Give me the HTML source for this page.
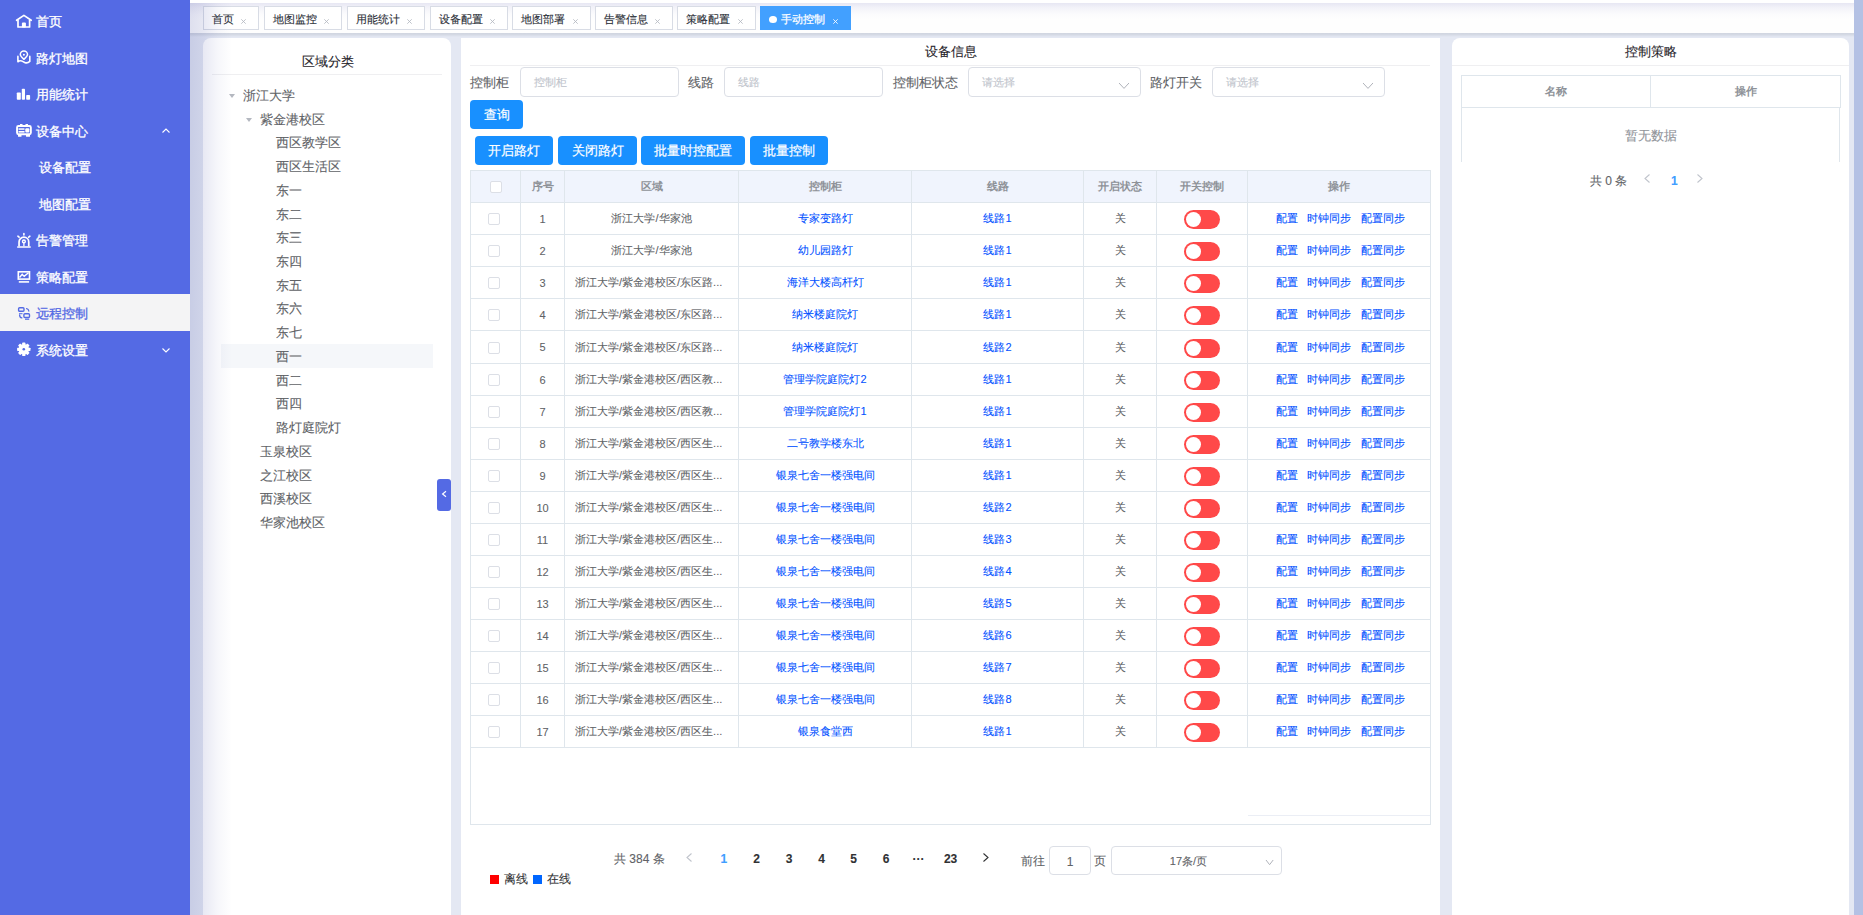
<!DOCTYPE html><html><head><meta charset="utf-8"><style>
*{box-sizing:border-box;margin:0;padding:0}
html,body{width:1863px;height:915px;overflow:hidden}
body{position:relative;background:#e4e8f3;font-family:"Liberation Sans",sans-serif;color:#606266;-webkit-text-stroke-width:0.1px}
.abs{position:absolute}
#sb{left:0;top:0;width:190px;height:915px;background:#546ae4}
.mi{-webkit-text-stroke-width:0.3px;position:absolute;left:0;width:190px;height:36.56px;color:#fff;font-size:13px;line-height:36.56px;white-space:nowrap}
.mi .t{position:absolute;left:36px;top:2px}
.mi.act .t{top:2px}
.mi.sub .t{left:39px}
.mi.act{background:#f4f4f5;color:#546ae4}

.mi .chev{position:absolute;left:162px;top:15px;width:8px;height:8px}
#rs{left:1854px;top:0;width:9px;height:915px;background:#b4c1e4}
#tb{left:190px;top:3px;width:1664px;height:30px;background:linear-gradient(#e7e7f3 0px,#f3f3f9 5px,#fbfbfd 11px,#fefefe 16px,#fefefe 30px)}
#tbsh{left:190px;top:33px;width:1664px;height:4px;background:linear-gradient(#d0d5e0 0px,#d4d9e4 1.5px,#e4e8f3 4px)}
.tab{position:absolute;top:6px;height:24px;border:1px solid #d8dce5;background:#fff;font-size:11px;line-height:24px;color:#2a2e36;padding-left:8px;-webkit-text-stroke-width:0.1px;white-space:nowrap}
.tab .x{position:absolute;right:12px;top:11.5px;width:5px;height:5px}
.tab.on{-webkit-text-stroke-width:0.25px;background:#42a0ff;border-color:#42a0ff;color:#fff}
.tab.on .x{color:#fff}
.panel{position:absolute;background:#fff}
#lp{left:203px;top:38px;width:248px;height:877px;border-radius:8px 8px 0 0}
#mp{left:461px;top:38px;width:979px;height:877px}
#rp{left:1452px;top:38px;width:397px;height:877px;border-radius:8px 8px 0 0}
#shadow{left:190px;top:3px;width:60px;height:912px;background:linear-gradient(90deg,rgba(40,50,150,.15) 0px,rgba(40,50,150,.11) 13px,rgba(40,50,150,.04) 28px,rgba(40,50,150,0) 42px)}
.ptitle{position:absolute;font-size:13px;color:#1f2329;white-space:nowrap}
.hr{position:absolute;height:1px;background:#efeff1}
.tn{position:absolute;font-size:13px;color:#606266;white-space:nowrap;line-height:24px;height:24px}
.tri{position:absolute;width:0;height:0;border-left:3.5px solid transparent;border-right:3.5px solid transparent;border-top:4px solid #b4b8c0}
.lbl{position:absolute;font-size:13px;color:#606266;white-space:nowrap;line-height:30px;top:68px}
.inp{position:absolute;top:67px;height:30px;border:1px solid #dcdfe6;border-radius:4px;background:#fff;font-size:11px;color:#c0c4cc;line-height:29px;padding-left:13px;white-space:nowrap}
.sel .arr{position:absolute;right:12px;top:10px;width:7px;height:7px;border-right:1px solid #a8abb2;border-bottom:1px solid #a8abb2;transform:rotate(45deg)}
.btn{-webkit-text-stroke-width:0.2px;position:absolute;background:#1890ff;color:#fff;font-size:13px;border-radius:4px;text-align:center;white-space:nowrap}
table.dt{position:absolute;border-collapse:collapse;table-layout:fixed;font-size:11px}
.dt td,.dt th{-webkit-text-stroke-width:0.08px;border:1px solid #dfe6ec;text-align:center;white-space:nowrap;overflow:hidden;text-overflow:ellipsis;padding:0 8px}
.dt th{-webkit-text-stroke-width:0;background:#f0f4fd;color:#8e9298;font-weight:bold;height:32px}
.dt td{height:32px;color:#606266}
.dt td.lk{color:#0050ff}
.dt td .cb{position:relative;left:-2px}
.dt td .sw{top:1px}
.cb{display:inline-block;width:12px;height:12px;border:1px solid #dcdfe6;border-radius:2px;background:#fff;vertical-align:middle}
.sw{display:inline-block;position:relative;width:36px;height:19px;border-radius:10px;background:#ff4949;vertical-align:middle}
.sw:after{content:"";position:absolute;left:1.5px;top:2px;width:15px;height:15px;border-radius:50%;background:#fff}
.ops span{margin:0 4px}
.pg{position:absolute;font-size:12px;white-space:nowrap}
</style></head><body>
<div id="sb" class="abs">
<div class="mi" style="top:2.00px"><span class="t">首页</span></div>
<svg class="ic" style="position:absolute;left:15px;top:12px" width="18" height="18" viewBox="0 0 18 18"><path d="M1.6 8.3 L8.9 3.4 L16.2 8.3" fill="none" stroke="#fff" stroke-width="1.7" stroke-linejoin="round" stroke-linecap="round"/><path d="M3 8 V15 H14.6 V8" fill="none" stroke="#fff" stroke-width="1.7" stroke-linejoin="round"/><rect x="6.9" y="10.6" width="4" height="4.8" rx="1" fill="#fff"/></svg>
<div class="mi" style="top:38.50px"><span class="t">路灯地图</span></div>
<svg class="ic" style="position:absolute;left:15px;top:49px" width="18" height="18" viewBox="0 0 18 18"><path d="M8.9 10.3 C6.6 8.4 5.3 7 5.3 5.6 A3.6 3.6 0 0 1 12.5 5.6 C12.5 7 11.2 8.4 8.9 10.3 Z" fill="none" stroke="#fff" stroke-width="1.5" stroke-linejoin="round"/><circle cx="8.9" cy="5.8" r="1" fill="#fff"/><path d="M2.9 7.4 V12.8 Q4.6 11.3 6.6 11.9 L10.2 13.7 Q12.7 14.4 14.8 12.4 V7.4" fill="none" stroke="#fff" stroke-width="1.6" stroke-linejoin="round" stroke-linecap="round"/></svg>
<div class="mi" style="top:75.00px"><span class="t">用能统计</span></div>
<svg class="ic" style="position:absolute;left:15px;top:86px" width="18" height="16" viewBox="0 0 18 16"><rect x="1.8" y="6.4" width="4" height="7.4" rx="0.8" fill="#fff"/><rect x="6.8" y="2.7" width="3.2" height="11.1" rx="0.8" fill="#fff"/><rect x="11.2" y="9" width="3.9" height="4.8" rx="0.8" fill="#fff"/></svg>
<div class="mi" style="top:111.50px"><span class="t">设备中心</span><svg class="chev" viewBox="0 0 8 8"><path d="M0.5 5.5 L4 2 L7.5 5.5" fill="none" stroke="#fff" stroke-width="1.1"/></svg></div>
<svg class="ic" style="position:absolute;left:15px;top:122px" width="18" height="16" viewBox="0 0 18 16"><rect x="2.05" y="3.95" width="13.8" height="8.3" rx="1.5" fill="none" stroke="#fff" stroke-width="1.9"/><rect x="5" y="2" width="2.5" height="2" fill="#fff"/><rect x="10.5" y="2" width="2.5" height="2" fill="#fff"/><rect x="3" y="12.5" width="3.5" height="2.2" rx="0.5" fill="#fff"/><rect x="11" y="12.5" width="4" height="2.2" rx="0.5" fill="#fff"/><rect x="3.5" y="6.3" width="6" height="1.5" fill="#fff"/><rect x="3.5" y="9" width="6" height="1.6" fill="#fff"/><rect x="10.3" y="6.2" width="4" height="4.3" rx="1" fill="#fff"/></svg>
<div class="mi sub" style="top:148.00px"><span class="t">设备配置</span></div>
<div class="mi sub" style="top:184.50px"><span class="t">地图配置</span></div>
<div class="mi" style="top:221.00px"><span class="t">告警管理</span></div>
<svg class="ic" style="position:absolute;left:15px;top:231px" width="18" height="18" viewBox="0 0 18 18"><rect x="2.1" y="15.2" width="13.7" height="1.6" rx="0.5" fill="#fff"/><path d="M4.05 15.3 V11 A4.85 4.85 0 0 1 13.75 11 V15.3" fill="none" stroke="#fff" stroke-width="1.7"/><circle cx="8.9" cy="10.4" r="1.4" fill="none" stroke="#fff" stroke-width="1.4"/><path d="M8.9 11.8 V15.3" stroke="#fff" stroke-width="1.3"/><path d="M8.9 2.5 V4 M2.9 5.2 L4.1 6.2 M14.9 5.2 L13.7 6.2" stroke="#fff" stroke-width="1.6" stroke-linecap="round"/></svg>
<div class="mi" style="top:257.50px"><span class="t">策略配置</span></div>
<svg class="ic" style="position:absolute;left:15px;top:268px" width="18" height="16" viewBox="0 0 18 16"><rect x="3.3" y="3.8" width="11.2" height="7.3" fill="none" stroke="#fff" stroke-width="1.6"/><path d="M4.5 9.5 L7.2 6.2 L9.2 8.4 L13.5 4.8" fill="none" stroke="#fff" stroke-width="1.4"/><rect x="3.8" y="13" width="10.3" height="1.8" fill="#fff" fill-opacity="0.88"/></svg>
<div class="mi act" style="top:294px;height:37px"><span class="t">远程控制</span></div>
<svg class="ic" style="position:absolute;left:15px;top:304px" width="18" height="17" viewBox="0 0 18 17"><rect x="3.6" y="3.7" width="5.4" height="3.6" rx="1" fill="none" stroke="#546ae4" stroke-width="1.4"/><rect x="4" y="9.2" width="3.5" height="1" fill="#546ae4"/><path d="M4.6 11 Q4.6 13.5 6.8 13.9" fill="none" stroke="#546ae4" stroke-width="1.3" stroke-linecap="round"/><path d="M11.6 4.6 Q13.5 5 13.8 7" fill="none" stroke="#546ae4" stroke-width="1.3" stroke-linecap="round"/><rect x="8.9" y="9.7" width="5.6" height="3.8" rx="1" fill="none" stroke="#546ae4" stroke-width="1.4"/><rect x="10" y="14.5" width="4.2" height="1.5" fill="#546ae4" fill-opacity="0.8"/></svg>
<div class="mi" style="top:330.50px"><span class="t">系统设置</span><svg class="chev" viewBox="0 0 8 8"><path d="M0.5 2.5 L4 6 L7.5 2.5" fill="none" stroke="#fff" stroke-width="1.1"/></svg></div>
<svg class="ic" style="position:absolute;left:15px;top:341px" width="18" height="18" viewBox="0 0 18 18"><g fill="#fff"><circle cx="8.8" cy="8.3" r="5.2"/><rect x="7.2" y="1.6" width="3.2" height="13.4" rx="0.6" transform="rotate(0 8.8 8.3)"/><rect x="7.2" y="1.6" width="3.2" height="13.4" rx="0.6" transform="rotate(45 8.8 8.3)"/><rect x="7.2" y="1.6" width="3.2" height="13.4" rx="0.6" transform="rotate(90 8.8 8.3)"/><rect x="7.2" y="1.6" width="3.2" height="13.4" rx="0.6" transform="rotate(135 8.8 8.3)"/></g><circle cx="8.8" cy="8.3" r="1.3" fill="#546ae4"/></svg>
</div>
<div class="abs" style="left:190px;top:0;width:1664px;height:3px;background:#fff"></div><div id="tb" class="abs"></div><div id="tbsh" class="abs"></div>
<div class="tab" style="left:203px;width:56px">首页<svg class="x" viewBox="0 0 5 5"><path d="M0.3 0.3 L4.7 4.7 M4.7 0.3 L0.3 4.7" stroke="#b4b8c0" stroke-width="0.85"/></svg></div>
<div class="tab" style="left:264px;width:78px">地图监控<svg class="x" viewBox="0 0 5 5"><path d="M0.3 0.3 L4.7 4.7 M4.7 0.3 L0.3 4.7" stroke="#b4b8c0" stroke-width="0.85"/></svg></div>
<div class="tab" style="left:347px;width:78px">用能统计<svg class="x" viewBox="0 0 5 5"><path d="M0.3 0.3 L4.7 4.7 M4.7 0.3 L0.3 4.7" stroke="#b4b8c0" stroke-width="0.85"/></svg></div>
<div class="tab" style="left:430px;width:78px">设备配置<svg class="x" viewBox="0 0 5 5"><path d="M0.3 0.3 L4.7 4.7 M4.7 0.3 L0.3 4.7" stroke="#b4b8c0" stroke-width="0.85"/></svg></div>
<div class="tab" style="left:512px;width:79px">地图部署<svg class="x" viewBox="0 0 5 5"><path d="M0.3 0.3 L4.7 4.7 M4.7 0.3 L0.3 4.7" stroke="#b4b8c0" stroke-width="0.85"/></svg></div>
<div class="tab" style="left:595px;width:78px">告警信息<svg class="x" viewBox="0 0 5 5"><path d="M0.3 0.3 L4.7 4.7 M4.7 0.3 L0.3 4.7" stroke="#b4b8c0" stroke-width="0.85"/></svg></div>
<div class="tab" style="left:677px;width:79px">策略配置<svg class="x" viewBox="0 0 5 5"><path d="M0.3 0.3 L4.7 4.7 M4.7 0.3 L0.3 4.7" stroke="#b4b8c0" stroke-width="0.85"/></svg></div>
<div class="tab on" style="left:760px;width:91px;padding-left:20px">手动控制<svg class="x" viewBox="0 0 5 5"><path d="M0.3 0.3 L4.7 4.7 M4.7 0.3 L0.3 4.7" stroke="#fff" stroke-width="0.85"/></svg><span style="position:absolute;left:7.5px;top:8.5px;width:8px;height:7.5px;border-radius:50%;background:#fff"></span></div>
<div id="rs" class="abs"></div>
<div id="lp" class="panel"></div><div id="mp" class="panel"></div><div id="rp" class="panel"></div>
<div class="ptitle" style="left:302px;top:52px;line-height:20px">区域分类</div>
<div class="hr" style="left:212px;top:74px;width:230px"></div>
<div class="abs" style="left:221px;top:344px;width:212px;height:24px;background:#f5f7fa"></div>
<div class="tn" style="left:243px;top:84.00px">浙江大学</div>
<div class="tri" style="left:229px;top:94.00px"></div>
<div class="tn" style="left:260px;top:107.72px">紫金港校区</div>
<div class="tri" style="left:246px;top:117.72px"></div>
<div class="tn" style="left:276px;top:131.44px">西区教学区</div>
<div class="tn" style="left:276px;top:155.16px">西区生活区</div>
<div class="tn" style="left:276px;top:178.88px">东一</div>
<div class="tn" style="left:276px;top:202.60px">东二</div>
<div class="tn" style="left:276px;top:226.32px">东三</div>
<div class="tn" style="left:276px;top:250.04px">东四</div>
<div class="tn" style="left:276px;top:273.76px">东五</div>
<div class="tn" style="left:276px;top:297.48px">东六</div>
<div class="tn" style="left:276px;top:321.20px">东七</div>
<div class="tn" style="left:276px;top:344.92px">西一</div>
<div class="tn" style="left:276px;top:368.64px">西二</div>
<div class="tn" style="left:276px;top:392.36px">西四</div>
<div class="tn" style="left:276px;top:416.08px">路灯庭院灯</div>
<div class="tn" style="left:260px;top:439.80px">玉泉校区</div>
<div class="tn" style="left:260px;top:463.52px">之江校区</div>
<div class="tn" style="left:260px;top:487.24px">西溪校区</div>
<div class="tn" style="left:260px;top:510.96px">华家池校区</div>
<div class="abs" style="left:437px;top:479px;width:14px;height:32px;background:#546ae4;border-radius:3px"><svg width="14" height="32" style="position:absolute;left:0;top:0"><path d="M9 12.3 L5.6 15 L9 17.7" fill="none" stroke="#fff" stroke-width="1.2"/></svg></div>
<div class="ptitle" style="left:925px;top:42px;line-height:20px">设备信息</div>
<div class="hr" style="left:470px;top:65px;width:960px"></div>
<div class="lbl" style="left:470px">控制柜</div>
<div class="inp" style="left:520px;width:159px">控制柜</div>
<div class="lbl" style="left:688px">线路</div>
<div class="inp" style="left:724px;width:159px">线路</div>
<div class="lbl" style="left:893px">控制柜状态</div>
<div class="inp sel" style="left:968px;width:173px">请选择<svg style="position:absolute;right:10px;top:13.6px" width="12" height="7.4" viewBox="0 0 12 7.4"><path d="M1 1 L6.0 6.4 L11 1" fill="none" stroke="#b0b3ba" stroke-width="1"/></svg></div>
<div class="lbl" style="left:1150px">路灯开关</div>
<div class="inp sel" style="left:1212px;width:173px">请选择<svg style="position:absolute;right:10px;top:13.6px" width="12" height="7.4" viewBox="0 0 12 7.4"><path d="M1 1 L6.0 6.4 L11 1" fill="none" stroke="#b0b3ba" stroke-width="1"/></svg></div>
<div class="btn" style="left:470px;top:100px;width:53px;height:29px;line-height:29px">查询</div>
<div class="btn" style="left:475px;top:136px;width:78px;height:29px;line-height:29px">开启路灯</div>
<div class="btn" style="left:558px;top:136px;width:79px;height:29px;line-height:29px">关闭路灯</div>
<div class="btn" style="left:641px;top:136px;width:104px;height:29px;line-height:29px">批量时控配置</div>
<div class="btn" style="left:750px;top:136px;width:78px;height:29px;line-height:29px">批量控制</div>
<table class="dt" style="left:470px;top:170px;width:960px">
<colgroup><col style="width:50px"><col style="width:44px"><col style="width:174px"><col style="width:173px"><col style="width:172px"><col style="width:73px"><col style="width:91px"><col style="width:183px"></colgroup>
<tr><th><span class="cb"></span></th><th>序号</th><th>区域</th><th>控制柜</th><th>线路</th><th>开启状态</th><th>开关控制</th><th>操作</th></tr>
<tr><td><span class="cb"></span></td><td>1</td><td>浙江大学/华家池</td><td class="lk">专家变路灯</td><td class="lk">线路1</td><td>关</td><td><span class="sw"></span></td><td class="lk ops" style="padding:0 0 0 3px"><span style="margin:0 9px 0 0">配置</span><span style="margin:0 10px 0 0">时钟同步</span><span style="margin:0">配置同步</span></td></tr>
<tr><td><span class="cb"></span></td><td>2</td><td>浙江大学/华家池</td><td class="lk">幼儿园路灯</td><td class="lk">线路1</td><td>关</td><td><span class="sw"></span></td><td class="lk ops" style="padding:0 0 0 3px"><span style="margin:0 9px 0 0">配置</span><span style="margin:0 10px 0 0">时钟同步</span><span style="margin:0">配置同步</span></td></tr>
<tr><td><span class="cb"></span></td><td>3</td><td style="text-align:left;padding-left:10px">浙江大学/紫金港校区/东区路...</td><td class="lk">海洋大楼高杆灯</td><td class="lk">线路1</td><td>关</td><td><span class="sw"></span></td><td class="lk ops" style="padding:0 0 0 3px"><span style="margin:0 9px 0 0">配置</span><span style="margin:0 10px 0 0">时钟同步</span><span style="margin:0">配置同步</span></td></tr>
<tr><td><span class="cb"></span></td><td>4</td><td style="text-align:left;padding-left:10px">浙江大学/紫金港校区/东区路...</td><td class="lk">纳米楼庭院灯</td><td class="lk">线路1</td><td>关</td><td><span class="sw"></span></td><td class="lk ops" style="padding:0 0 0 3px"><span style="margin:0 9px 0 0">配置</span><span style="margin:0 10px 0 0">时钟同步</span><span style="margin:0">配置同步</span></td></tr>
<tr style="height:33px"><td><span class="cb"></span></td><td>5</td><td style="text-align:left;padding-left:10px">浙江大学/紫金港校区/东区路...</td><td class="lk">纳米楼庭院灯</td><td class="lk">线路2</td><td>关</td><td><span class="sw"></span></td><td class="lk ops" style="padding:0 0 0 3px"><span style="margin:0 9px 0 0">配置</span><span style="margin:0 10px 0 0">时钟同步</span><span style="margin:0">配置同步</span></td></tr>
<tr><td><span class="cb"></span></td><td>6</td><td style="text-align:left;padding-left:10px">浙江大学/紫金港校区/西区教...</td><td class="lk">管理学院庭院灯2</td><td class="lk">线路1</td><td>关</td><td><span class="sw"></span></td><td class="lk ops" style="padding:0 0 0 3px"><span style="margin:0 9px 0 0">配置</span><span style="margin:0 10px 0 0">时钟同步</span><span style="margin:0">配置同步</span></td></tr>
<tr><td><span class="cb"></span></td><td>7</td><td style="text-align:left;padding-left:10px">浙江大学/紫金港校区/西区教...</td><td class="lk">管理学院庭院灯1</td><td class="lk">线路1</td><td>关</td><td><span class="sw"></span></td><td class="lk ops" style="padding:0 0 0 3px"><span style="margin:0 9px 0 0">配置</span><span style="margin:0 10px 0 0">时钟同步</span><span style="margin:0">配置同步</span></td></tr>
<tr><td><span class="cb"></span></td><td>8</td><td style="text-align:left;padding-left:10px">浙江大学/紫金港校区/西区生...</td><td class="lk">二号教学楼东北</td><td class="lk">线路1</td><td>关</td><td><span class="sw"></span></td><td class="lk ops" style="padding:0 0 0 3px"><span style="margin:0 9px 0 0">配置</span><span style="margin:0 10px 0 0">时钟同步</span><span style="margin:0">配置同步</span></td></tr>
<tr><td><span class="cb"></span></td><td>9</td><td style="text-align:left;padding-left:10px">浙江大学/紫金港校区/西区生...</td><td class="lk">银泉七舍一楼强电间</td><td class="lk">线路1</td><td>关</td><td><span class="sw"></span></td><td class="lk ops" style="padding:0 0 0 3px"><span style="margin:0 9px 0 0">配置</span><span style="margin:0 10px 0 0">时钟同步</span><span style="margin:0">配置同步</span></td></tr>
<tr><td><span class="cb"></span></td><td>10</td><td style="text-align:left;padding-left:10px">浙江大学/紫金港校区/西区生...</td><td class="lk">银泉七舍一楼强电间</td><td class="lk">线路2</td><td>关</td><td><span class="sw"></span></td><td class="lk ops" style="padding:0 0 0 3px"><span style="margin:0 9px 0 0">配置</span><span style="margin:0 10px 0 0">时钟同步</span><span style="margin:0">配置同步</span></td></tr>
<tr><td><span class="cb"></span></td><td>11</td><td style="text-align:left;padding-left:10px">浙江大学/紫金港校区/西区生...</td><td class="lk">银泉七舍一楼强电间</td><td class="lk">线路3</td><td>关</td><td><span class="sw"></span></td><td class="lk ops" style="padding:0 0 0 3px"><span style="margin:0 9px 0 0">配置</span><span style="margin:0 10px 0 0">时钟同步</span><span style="margin:0">配置同步</span></td></tr>
<tr><td><span class="cb"></span></td><td>12</td><td style="text-align:left;padding-left:10px">浙江大学/紫金港校区/西区生...</td><td class="lk">银泉七舍一楼强电间</td><td class="lk">线路4</td><td>关</td><td><span class="sw"></span></td><td class="lk ops" style="padding:0 0 0 3px"><span style="margin:0 9px 0 0">配置</span><span style="margin:0 10px 0 0">时钟同步</span><span style="margin:0">配置同步</span></td></tr>
<tr><td><span class="cb"></span></td><td>13</td><td style="text-align:left;padding-left:10px">浙江大学/紫金港校区/西区生...</td><td class="lk">银泉七舍一楼强电间</td><td class="lk">线路5</td><td>关</td><td><span class="sw"></span></td><td class="lk ops" style="padding:0 0 0 3px"><span style="margin:0 9px 0 0">配置</span><span style="margin:0 10px 0 0">时钟同步</span><span style="margin:0">配置同步</span></td></tr>
<tr><td><span class="cb"></span></td><td>14</td><td style="text-align:left;padding-left:10px">浙江大学/紫金港校区/西区生...</td><td class="lk">银泉七舍一楼强电间</td><td class="lk">线路6</td><td>关</td><td><span class="sw"></span></td><td class="lk ops" style="padding:0 0 0 3px"><span style="margin:0 9px 0 0">配置</span><span style="margin:0 10px 0 0">时钟同步</span><span style="margin:0">配置同步</span></td></tr>
<tr><td><span class="cb"></span></td><td>15</td><td style="text-align:left;padding-left:10px">浙江大学/紫金港校区/西区生...</td><td class="lk">银泉七舍一楼强电间</td><td class="lk">线路7</td><td>关</td><td><span class="sw"></span></td><td class="lk ops" style="padding:0 0 0 3px"><span style="margin:0 9px 0 0">配置</span><span style="margin:0 10px 0 0">时钟同步</span><span style="margin:0">配置同步</span></td></tr>
<tr><td><span class="cb"></span></td><td>16</td><td style="text-align:left;padding-left:10px">浙江大学/紫金港校区/西区生...</td><td class="lk">银泉七舍一楼强电间</td><td class="lk">线路8</td><td>关</td><td><span class="sw"></span></td><td class="lk ops" style="padding:0 0 0 3px"><span style="margin:0 9px 0 0">配置</span><span style="margin:0 10px 0 0">时钟同步</span><span style="margin:0">配置同步</span></td></tr>
<tr><td><span class="cb"></span></td><td>17</td><td style="text-align:left;padding-left:10px">浙江大学/紫金港校区/西区生...</td><td class="lk">银泉食堂西</td><td class="lk">线路1</td><td>关</td><td><span class="sw"></span></td><td class="lk ops" style="padding:0 0 0 3px"><span style="margin:0 9px 0 0">配置</span><span style="margin:0 10px 0 0">时钟同步</span><span style="margin:0">配置同步</span></td></tr>
</table>
<div class="abs" style="left:470px;top:747px;width:961px;height:78px;border:1px solid #dfe6ec;border-top:none"></div>
<div class="abs" style="left:1248px;top:815px;width:182px;height:1px;background:#ebeef5"></div>
<div class="pg" style="left:614px;top:851px;color:#606266">共 384 条</div>
<svg style="position:absolute;left:685.5px;top:852.7px" width="7" height="10" viewBox="0 0 7 10"><path d="M5.5 0.5 L1 4.5 L5.5 8.5" fill="none" stroke="#c0c4cc" stroke-width="1.1"/></svg>
<div class="pg" style="left:708.9px;width:30px;text-align:center;top:852px;font-weight:bold;color:#409eff">1</div>
<div class="pg" style="left:741.6px;width:30px;text-align:center;top:852px;font-weight:bold;color:#303133">2</div>
<div class="pg" style="left:774px;width:30px;text-align:center;top:852px;font-weight:bold;color:#303133">3</div>
<div class="pg" style="left:806.6px;width:30px;text-align:center;top:852px;font-weight:bold;color:#303133">4</div>
<div class="pg" style="left:838.6px;width:30px;text-align:center;top:852px;font-weight:bold;color:#303133">5</div>
<div class="pg" style="left:871px;width:30px;text-align:center;top:852px;font-weight:bold;color:#303133">6</div>
<div class="pg" style="left:903.6px;width:30px;text-align:center;top:852px;font-weight:bold;color:#303133">···</div>
<div class="pg" style="left:935.6px;width:30px;text-align:center;top:852px;font-weight:bold;color:#303133">23</div>
<svg style="position:absolute;left:983.0px;top:853.3px" width="7" height="10" viewBox="0 0 7 10"><path d="M0.5 0.5 L5 4.5 L0.5 8.5" fill="none" stroke="#303133" stroke-width="1.1"/></svg>
<div class="pg" style="left:1021px;top:853px;color:#606266">前往</div>
<div class="inp" style="left:1049px;top:846px;width:42px;height:29px;padding:0;text-align:center;color:#606266;font-size:12px;line-height:30px">1</div>
<div class="pg" style="left:1094px;top:853px;color:#606266">页</div>
<div class="inp sel" style="left:1111px;top:846px;width:171px;height:29px;padding:0 16px 0 0;text-align:center;color:#606266;font-size:11px;line-height:28px">17条/页<svg style="position:absolute;right:6.5px;top:12px" width="9.2" height="6.7" viewBox="0 0 9.2 6.7"><path d="M1 1 L4.6 5.7 L8.2 1" fill="none" stroke="#b0b3ba" stroke-width="1"/></svg></div>
<div class="abs" style="left:490px;top:875px;width:9px;height:9px;background:#f00"></div>
<div class="pg" style="left:504px;top:871px;color:#303133">离线</div>
<div class="abs" style="left:533px;top:875px;width:9px;height:9px;background:#06f"></div>
<div class="pg" style="left:547px;top:871px;color:#303133">在线</div>
<div class="ptitle" style="left:1625px;top:42px;line-height:20px">控制策略</div>
<div class="hr" style="left:1452px;top:65px;width:397px"></div>
<table class="dt" style="left:1461px;top:75px;width:378.5px"><colgroup><col style="width:189px"><col style="width:190px"></colgroup><tr><th style="background:#fff">名称</th><th style="background:#fff">操作</th></tr></table>
<div class="abs" style="left:1461px;top:107px;width:379px;height:55px;border-left:1px solid #dfe6ec;border-right:1px solid #dfe6ec"></div>
<div class="pg" style="left:1625px;top:127px;color:#909399;font-size:13px">暂无数据</div>
<div class="pg" style="left:1590px;top:173px;color:#606266">共 0 条</div>
<svg style="position:absolute;left:1643.5px;top:174.1px" width="7" height="10" viewBox="0 0 7 10"><path d="M5.5 0.5 L1 4.5 L5.5 8.5" fill="none" stroke="#c0c4cc" stroke-width="1.1"/></svg>
<div class="pg" style="left:1671px;top:174px;color:#409eff;font-weight:bold">1</div>
<svg style="position:absolute;left:1697.0px;top:174.1px" width="7" height="10" viewBox="0 0 7 10"><path d="M0.5 0.5 L5 4.5 L0.5 8.5" fill="none" stroke="#c0c4cc" stroke-width="1.1"/></svg>
<div id="shadow" class="abs"></div>
</body></html>
